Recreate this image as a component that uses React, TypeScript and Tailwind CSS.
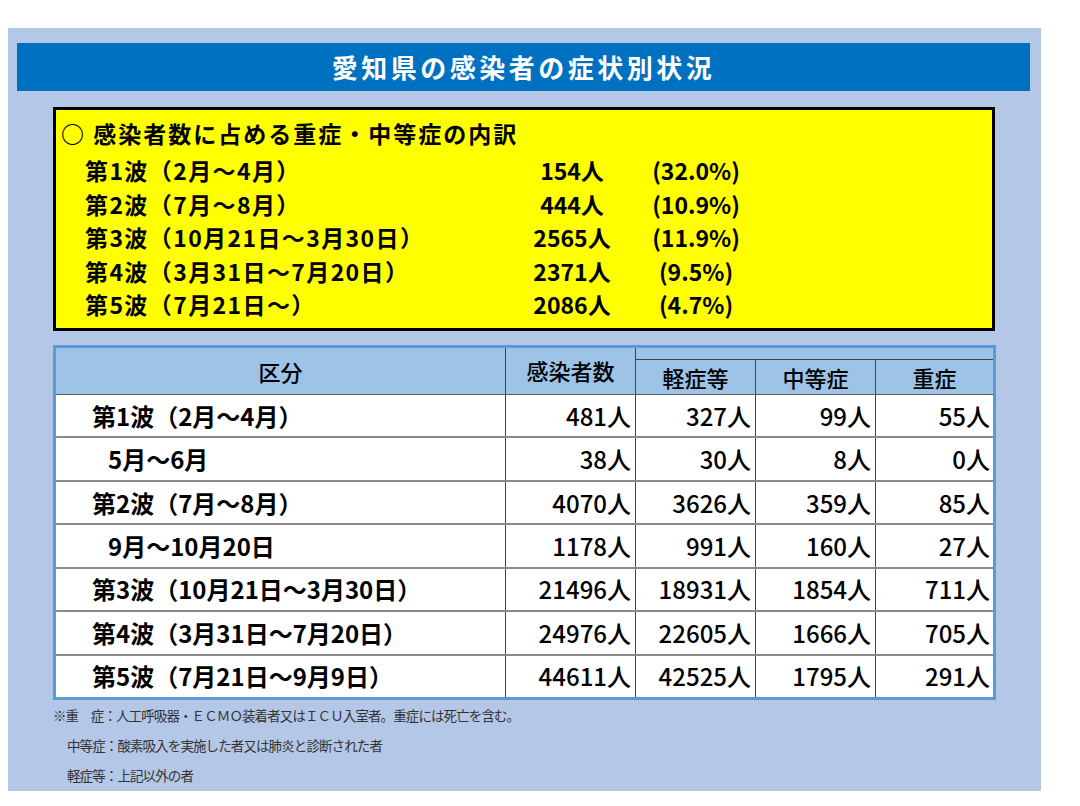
import React from "react";

type Wave = { label: string; count: string; pct: string };

const waves: Wave[] = [
  { label: "第1波（2月～4月）", count: "154人", pct: "(32.0%)" },
  { label: "第2波（7月～8月）", count: "444人", pct: "(10.9%)" },
  { label: "第3波（10月21日～3月30日）", count: "2565人", pct: "(11.9%)" },
  { label: "第4波（3月31日～7月20日）", count: "2371人", pct: "(9.5%)" },
  { label: "第5波（7月21日～）", count: "2086人", pct: "(4.7%)" },
];

type Row = { label: string; indent?: boolean; cells: string[] };

const rows: Row[] = [
  { label: "第1波（2月～4月）", cells: ["481人", "327人", "99人", "55人"] },
  { label: "5月～6月", indent: true, cells: ["38人", "30人", "8人", "0人"] },
  { label: "第2波（7月～8月）", cells: ["4070人", "3626人", "359人", "85人"] },
  { label: "9月～10月20日", indent: true, cells: ["1178人", "991人", "160人", "27人"] },
  { label: "第3波（10月21日～3月30日）", cells: ["21496人", "18931人", "1854人", "711人"] },
  { label: "第4波（3月31日～7月20日）", cells: ["24976人", "22605人", "1666人", "705人"] },
  { label: "第5波（7月21日～9月9日）", cells: ["44611人", "42525人", "1795人", "291人"] },
];

const font = { fontFamily: '"Noto Sans CJK JP", "Noto Sans", sans-serif' };

export default function App() {
  return (
    <div className="w-[1080px] h-[806px] bg-white pt-[28px] pl-[8px]" style={font}>
      <div className="w-[1033px] h-[763px] bg-[#b4c7e7] pt-[15px] flex flex-col">
        {/* title bar */}
        <div className="ml-[9px] w-[1013px] h-[48px] bg-[#0070c0] flex items-center justify-center">
          <span className="text-white text-[26px] font-bold tracking-[3.5px] leading-none">
            愛知県の感染者の症状別状況
          </span>
        </div>

        {/* yellow summary box */}
        <div className="ml-[45px] mt-[16px] w-[942px] h-[224px] bg-[#ffff00] border-[3px] border-black flex flex-col text-black font-bold">
          <div className="h-[44px] pl-[5px] pt-[3px] flex items-center text-[23px] tracking-[2px] leading-none">
            ○ 感染者数に占める重症・中等症の内訳
          </div>
          <div className="flex flex-col">
            {waves.map((w) => (
              <div key={w.label} className="h-[33.5px] flex items-center text-[23px] leading-none">
                <span className="w-[456px] pl-[29px] tracking-[1.4px]">{w.label}</span>
                <span className="w-[120px] text-center">{w.count}</span>
                <span className="w-[128px] text-center">{w.pct}</span>
              </div>
            ))}
          </div>
        </div>

        {/* detail table */}
        <div className="ml-[45px] mt-[14px] w-[943px] h-[355px] border-[3px] border-[#5b9bd5] bg-white flex flex-col text-black">
          {/* header */}
          <div className="h-[47px] flex bg-[#9dc3e6] border-b border-[#595959] text-[22px] font-medium">
            <div className="w-[450px] flex items-center justify-center border-r border-[#404040]">区分</div>
            <div className="w-[130px] flex items-start justify-center pt-[6px] border-r border-[#404040]">感染者数</div>
            <div className="flex-1 flex flex-col">
              <div className="h-[11px]" />
              <div className="flex-1 flex border-t border-[#404040]">
                <div className="w-[120px] flex items-center justify-center border-r border-[#404040]">軽症等</div>
                <div className="w-[120px] flex items-center justify-center border-r border-[#404040]">中等症</div>
                <div className="flex-1 flex items-center justify-center">重症</div>
              </div>
            </div>
          </div>
          {/* body */}
          {rows.map((r, i) => (
            <div
              key={r.label}
              className={
                i < rows.length - 1
                  ? "flex-1 flex border-b-2 border-[#8a8a8a] text-[24px] leading-none"
                  : "flex-1 flex text-[24px] leading-none"
              }
            >
              <div
                className={
                  r.indent
                    ? "w-[450px] flex items-center pl-[52px] font-bold border-r border-[#404040]"
                    : "w-[450px] flex items-center pl-[36px] font-bold border-r border-[#404040]"
                }
              >
                {r.label}
              </div>
              <div className="w-[130px] flex items-center justify-end pr-[4px] font-medium border-r border-[#404040]">{r.cells[0]}</div>
              <div className="w-[120px] flex items-center justify-end pr-[4px] font-medium border-r border-[#404040]">{r.cells[1]}</div>
              <div className="w-[120px] flex items-center justify-end pr-[4px] font-medium border-r border-[#404040]">{r.cells[2]}</div>
              <div className="flex-1 flex items-center justify-end pr-[3px] font-medium">{r.cells[3]}</div>
            </div>
          ))}
        </div>

        {/* notes */}
        <div className="ml-[45px] mt-[1px] flex flex-col text-[13.5px] tracking-[-0.9px] text-[#333333] leading-none">
          <div className="h-[30px] flex items-center">※重　症：人工呼吸器・ＥＣＭＯ装着者又はＩＣＵ入室者。重症には死亡を含む。</div>
          <div className="h-[30px] flex items-center pl-[14px]">中等症：酸素吸入を実施した者又は肺炎と診断された者</div>
          <div className="h-[30px] flex items-center pl-[14px]">軽症等：上記以外の者</div>
        </div>
      </div>
    </div>
  );
}
